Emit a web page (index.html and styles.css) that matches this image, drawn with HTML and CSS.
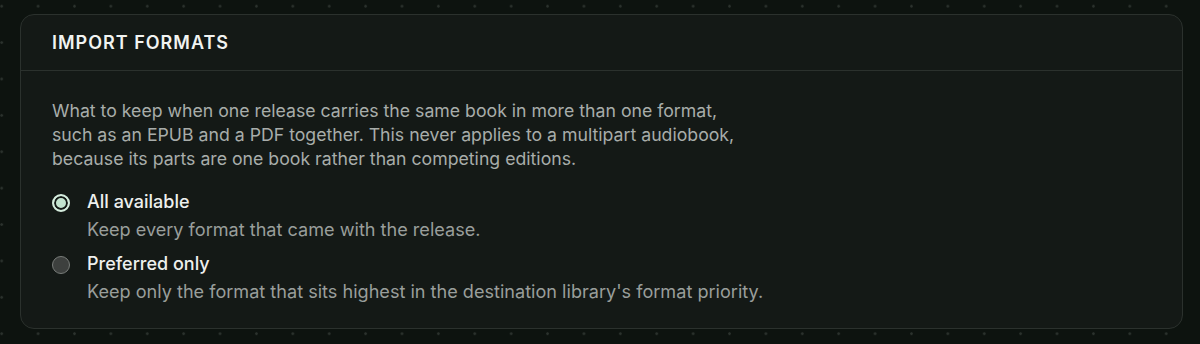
FILE: index.html
```html
<!DOCTYPE html>
<html lang="en">
<head>
    <meta charset="UTF-8">
    <meta name="viewport" content="width=device-width, initial-scale=1.0">
    <title>Import Formats</title>
    <link rel="stylesheet" href="styles.css">
</head>
<body>
    <section class="card">
        <div class="card-header">
            <h2>Import Formats</h2>
        </div>
        <div class="card-body">
            <p class="intro">
                What to keep when one release carries the same book in more than one format,<br>
                such as an EPUB and a PDF together. This never applies to a multipart audiobook,<br>
                because its parts are one book rather than competing editions.
            </p>

            <div class="options">
                <label class="option">
                    <input type="radio" name="formats" value="all" checked>
                    <span class="radio"></span>
                    <span class="option-text">
                        <span class="option-title">All available</span>
                        <span class="option-desc">Keep every format that came with the release.</span>
                    </span>
                </label>
                <label class="option">
                    <input type="radio" name="formats" value="preferred">
                    <span class="radio"></span>
                    <span class="option-text">
                        <span class="option-title">Preferred only</span>
                        <span class="option-desc">Keep only the format that sits highest in the destination library's format priority.</span>
                    </span>
                </label>
            </div>
        </div>
    </section>
</body>
</html>
```

FILE: styles.css
```css
html, body {
    height: 100%;
}
body {
    margin: 0;
    padding: 14px 17px 0 20px;
    box-sizing: border-box;
    font-family: 'Inter', 'Noto Sans', sans-serif;
    font-size: 18px;
    line-height: 24px;
    color: #a8adaa;
    background-color: #0d130f;
    background-image: radial-gradient(circle, #2b322d 1px, transparent 1.6px);
    background-size: 36.4px 36.4px;
    background-position: -16.5px -12px;
}
.card {
    background-color: #141916;
    border: 1px solid #2b312d;
    border-radius: 14px;
    height: 315px;
    box-sizing: border-box;
}
.card-header {
    height: 55px;
    padding: 0 31px;
    display: flex;
    align-items: center;
    border-bottom: 1px solid #2b312d;
}
.card-header h2 {
    margin: 0;
    font-size: 18px;
    font-weight: 600;
    letter-spacing: 1px;
    text-transform: uppercase;
    color: #f1f3f1;
}
.card-body {
    padding: 28px 31px 0;
}
.intro {
    margin: 0 0 19px;
    font-size: 17.7px;
    color: #a8adaa;
}
.options {
    display: grid;
    gap: 11px;
}
.option {
    display: flex;
    align-items: flex-start;
    gap: 17px;
    cursor: pointer;
}
.option input {
    display: none;
}
.radio {
    width: 18px;
    height: 18px;
    margin-top: 3.5px;
    flex-shrink: 0;
    box-sizing: border-box;
    border-radius: 50%;
    background-color: #3d403e;
    border: 1.5px solid #787c79;
}
.option input:checked + .radio {
    background-color: #c3e4cf;
    border: 2px solid #d5ecdd;
    box-shadow: inset 0 0 0 2px #141916;
}
.option-text {
    display: flex;
    flex-direction: column;
    gap: 3px;
}
.option-title {
    font-weight: 500;
    color: #eef0ee;
}
.option-desc {
    font-size: 18.1px;
    color: #999e9b;
}
```
